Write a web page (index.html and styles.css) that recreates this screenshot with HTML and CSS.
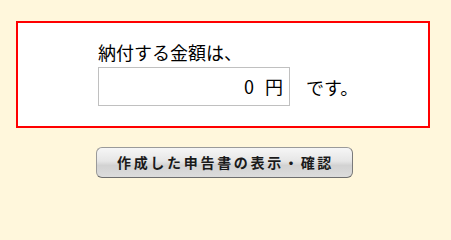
FILE: index.html
```html
<!DOCTYPE html>
<html lang="ja">
<head>
<meta charset="utf-8">
<link rel="stylesheet" href="styles.css">
</head>
<body>
<div class="page">
  <div class="notice">
    <div class="content">
      <div class="label">納付する金額は、</div>
      <div class="row">
        <div class="amount">0 円</div>
        <div class="suffix">です。</div>
      </div>
    </div>
  </div>
  <div class="actions">
    <button class="btn" type="button">作成した申告書の表示・確認</button>
  </div>
</div>
</body>
</html>
```
FILE: styles.css
```css
html, body {
  margin: 0;
  padding: 0;
  background: #fff7dc;
}
.page {
  padding: 21px 0 0 16px;
  font-family: "Noto Sans CJK JP", "Noto Sans", sans-serif;
  color: #000;
}
.notice {
  width: 410px;
  border: 2px solid #ff0000;
  background: #ffffff;
  padding: 17px 0 20px 0;
}
.content {
  padding-left: 80px;
}
.label {
  font-size: 18px;
  line-height: 24px;
  margin-bottom: 3px;
}
.row {
  display: flex;
  align-items: center;
}
.amount {
  width: 184px;
  height: 37px;
  border: 1px solid #c0c0c0;
  text-align: right;
  padding-right: 6px;
  font-size: 18px;
  line-height: 37px;
  word-spacing: 7px;
}
.suffix {
  margin-left: 16px;
  font-size: 18px;
  line-height: 37px;
  padding-top: 2px;
}
.actions {
  width: 414px;
  display: flex;
  justify-content: center;
  margin-top: 19px;
}
.btn {
  width: 257px;
  height: 31px;
  margin-left: 2px;
  border: 1px solid #9a9a9a;
  border-bottom-color: #6e6e6e;
  border-right-color: #7a7a7a;
  border-radius: 6px;
  background: linear-gradient(#f6f6f6 0%, #e6e6e6 45%, #d2d2d2 60%, #dcdcdc 100%);
  font-family: "Noto Sans CJK JP", sans-serif;
  font-weight: bold;
  font-size: 14px;
  letter-spacing: 2.7px;
  color: #1a1a1a;
  padding: 0 0 0 3px;
  line-height: 29px;
}
```
